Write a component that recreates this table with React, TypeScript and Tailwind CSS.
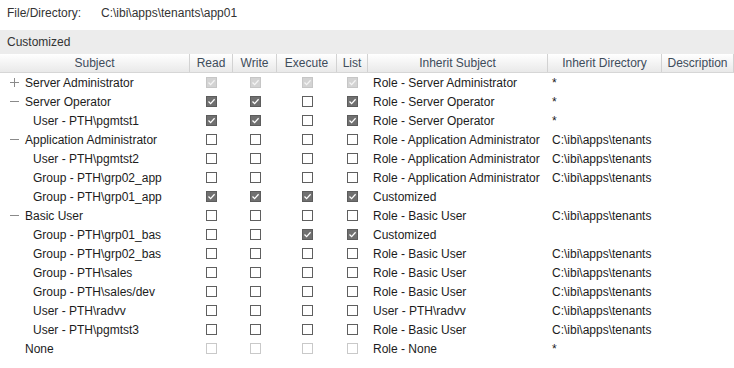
import React from "react";

type Box = "on" | "off" | "dis-on" | "dis-off";

type Row = {
  subject: string;
  level: 0 | 1;
  sign?: "+" | "-";
  perms: Box[];
  inherit: string;
  dir: string;
};

const all = (b: Box): Box[] => [b, b, b, b];

const rows: Row[] = [
  { subject: "Server Administrator", level: 0, sign: "+", perms: all("dis-on"), inherit: "Role - Server Administrator", dir: "*" },
  { subject: "Server Operator", level: 0, sign: "-", perms: ["on", "on", "off", "on"], inherit: "Role - Server Operator", dir: "*" },
  { subject: "User - PTH\\pgmtst1", level: 1, perms: ["on", "on", "off", "on"], inherit: "Role - Server Operator", dir: "*" },
  { subject: "Application Administrator", level: 0, sign: "-", perms: all("off"), inherit: "Role - Application Administrator", dir: "C:\\ibi\\apps\\tenants" },
  { subject: "User - PTH\\pgmtst2", level: 1, perms: all("off"), inherit: "Role - Application Administrator", dir: "C:\\ibi\\apps\\tenants" },
  { subject: "Group - PTH\\grp02_app", level: 1, perms: all("off"), inherit: "Role - Application Administrator", dir: "C:\\ibi\\apps\\tenants" },
  { subject: "Group - PTH\\grp01_app", level: 1, perms: all("on"), inherit: "Customized", dir: "" },
  { subject: "Basic User", level: 0, sign: "-", perms: all("off"), inherit: "Role - Basic User", dir: "C:\\ibi\\apps\\tenants" },
  { subject: "Group - PTH\\grp01_bas", level: 1, perms: ["off", "off", "on", "on"], inherit: "Customized", dir: "" },
  { subject: "Group - PTH\\grp02_bas", level: 1, perms: all("off"), inherit: "Role - Basic User", dir: "C:\\ibi\\apps\\tenants" },
  { subject: "Group - PTH\\sales", level: 1, perms: all("off"), inherit: "Role - Basic User", dir: "C:\\ibi\\apps\\tenants" },
  { subject: "Group - PTH\\sales/dev", level: 1, perms: all("off"), inherit: "Role - Basic User", dir: "C:\\ibi\\apps\\tenants" },
  { subject: "User - PTH\\radvv", level: 1, perms: all("off"), inherit: "User - PTH\\radvv", dir: "C:\\ibi\\apps\\tenants" },
  { subject: "User - PTH\\pgmtst3", level: 1, perms: all("off"), inherit: "Role - Basic User", dir: "C:\\ibi\\apps\\tenants" },
  { subject: "None", level: 0, perms: all("dis-off"), inherit: "Role - None", dir: "*" },
];

const permCols = ["w-[43px]", "w-[44px]", "w-[60px]", "w-[31px]"];

const Check = ({ state }: { state: Box }) => {
  if (state === "off")
    return <span className="block w-[11px] h-[11px] border border-[#5f5f5f] bg-white" />;
  if (state === "dis-off")
    return <span className="block w-[11px] h-[11px] border border-[#c9c9c9] bg-white" />;
  const dis = state === "dis-on";
  return (
    <span
      className={
        "flex items-center justify-center w-[11px] h-[11px] border " +
        (dis ? "bg-[#d3d3d3] border-[#c6c6c6]" : "bg-[#707070] border-[#5c5c5c]")
      }
    >
      <svg width="9" height="9" viewBox="0 0 9 9">
        <path
          d="M1.5 4.5 L3.6 6.6 L7.6 2.2"
          fill="none"
          stroke={dis ? "#f4f4f4" : "#ffffff"}
          strokeWidth="1.3"
        />
      </svg>
    </span>
  );
};

const Sign = ({ sign }: { sign?: "+" | "-" }) => {
  if (!sign) return <span className="w-[9px]" />;
  return (
    <svg width="9" height="9" viewBox="0 0 9 9">
      <path d="M0 4.5 H9" stroke="#8a8a8a" strokeWidth="1" />
      {sign === "+" && <path d="M4.5 0 V9" stroke="#8a8a8a" strokeWidth="1" />}
    </svg>
  );
};

const headers = [
  { label: "Subject", w: "w-[190px]" },
  { label: "Read", w: "w-[43px]" },
  { label: "Write", w: "w-[44px]" },
  { label: "Execute", w: "w-[60px]" },
  { label: "List", w: "w-[31px]" },
  { label: "Inherit Subject", w: "w-[180px]" },
  { label: "Inherit Directory", w: "w-[114px]" },
  { label: "Description", w: "flex-1" },
];

export default function App() {
  return (
    <div className="w-[734px] h-[368px] bg-white overflow-hidden text-[12px] text-[#1c1c1c] font-['Liberation_Sans',Arial,sans-serif]">
      {/* path line */}
      <div className="flex h-[30px] pt-[4px] pl-[7px] text-[#333]">
        <span className="w-[94px]">File/Directory:</span>
        <span>C:\ibi\apps\tenants\app01</span>
      </div>

      {/* group bar */}
      <div className="h-[24px] bg-[#ececec] pl-[7px] flex items-center text-[#333]">
        Customized
      </div>

      {/* column headers */}
      <div className="flex h-[19px] bg-gradient-to-b from-white to-[#e9e9e9] border-b border-[#d6d6d6] text-[#3e4c5b]">
        {headers.map((h) => (
          <div
            key={h.label}
            className={h.w + " flex items-center justify-center border-r border-[#d2d2d2] shrink-0"}
          >
            {h.label}
          </div>
        ))}
      </div>

      {/* rows */}
      {rows.map((r, i) => (
        <div key={i} className="flex h-[19px] items-center">
          <div className={"w-[190px] flex items-center shrink-0 " + (r.level ? "pl-[33px]" : "pl-[10px]")}>
            {r.level === 0 && (
              <span className="w-[15px] flex items-center">
                <Sign sign={r.sign} />
              </span>
            )}
            <span>{r.subject}</span>
          </div>
          {r.perms.map((p, j) => (
            <div key={j} className={permCols[j] + " flex justify-center shrink-0"}>
              <Check state={p} />
            </div>
          ))}
          <div className="w-[180px] pl-[5px] shrink-0">{r.inherit}</div>
          <div className="w-[114px] pl-[4px] shrink-0">{r.dir}</div>
          <div className="flex-1" />
        </div>
      ))}
    </div>
  );
}
